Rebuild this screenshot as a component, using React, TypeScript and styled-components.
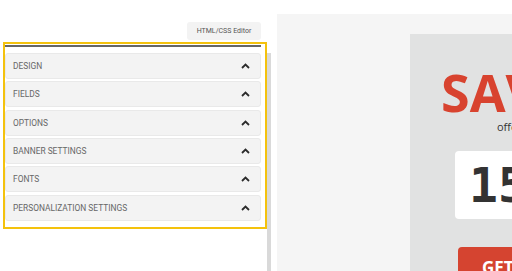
import React from "react";
import styled, { createGlobalStyle } from "styled-components";

const GlobalStyle = createGlobalStyle`
  html, body { margin: 0; padding: 0; background: #ffffff; overflow: hidden; }
  body { font-family: Roboto, "Liberation Sans", sans-serif; }
`;

const Page = styled.div`
  display: flex;
  width: 512px;
  height: 271px;
  overflow: hidden;
`;

const Sidebar = styled.aside`
  flex: none;
  width: 277px;
  display: flex;
  flex-direction: column;
`;

const Toolbar = styled.div`
  display: flex;
  justify-content: flex-end;
  padding: 22px 16px 0 0;
  margin-bottom: 2px;
`;

const EditorButton = styled.button`
  width: 74px;
  height: 18px;
  border: none;
  border-radius: 3px;
  background: #f3f3f3;
  color: #555;
  font-family: Roboto, sans-serif;
  font-size: 7px;
  padding: 0;
  cursor: pointer;
`;

const SidebarBody = styled.div`
  display: flex;
  flex: 1;
`;

const PanelFrame = styled.div`
  box-sizing: border-box;
  margin-left: 3px;
  width: 264px;
  height: 187px;
  border: 2px solid #f4c20d;
  padding: 1px 4px 0 0;
  display: flex;
  flex-direction: column;
`;

const TopRule = styled.div`
  height: 2px;
  background: #666;
  margin-bottom: 6px;
`;

const SectionList = styled.div`
  display: flex;
  flex-direction: column;
  gap: 2.35px;
`;

const SectionRow = styled.div`
  box-sizing: border-box;
  height: 26px;
  display: flex;
  align-items: center;
  justify-content: space-between;
  padding: 0 10px 0 7px;
  background: #f3f3f3;
  border: 1px solid #e9e9e9;
  border-radius: 3px;
`;

const SectionTitle = styled.span`
  font-size: 8.4px;
  color: #676767;
  text-transform: uppercase;
  letter-spacing: 0;
`;

const ScrollTrack = styled.div`
  width: 4px;
  margin-top: 11px;
  background: #d9d9d9;
`;

const Preview = styled.main`
  flex: 1;
  margin-top: 14px;
  background: #f5f5f5;
  padding: 20px 0 0 133px;
  display: flex;
  align-items: flex-start;
`;

const Card = styled.div`
  flex: none;
  width: 300px;
  height: 300px;
  background: #e1e2e2;
  display: flex;
  flex-direction: column;
  align-items: flex-start;
  padding-top: 32px;
  box-sizing: border-box;
`;

const Headline = styled.div<{ $indent: number }>`
  margin-left: ${(p) => p.$indent}px;
  font-family: "Open Sans", sans-serif;
  font-weight: 700;
  font-size: 52px;
  line-height: 52px;
  color: #d8432f;
  white-space: nowrap;
`;

const Subline = styled.div<{ $indent: number }>`
  margin-left: ${(p) => p.$indent}px;
  margin-top: 2px;
  font-family: "Open Sans", sans-serif;
  font-size: 11px;
  line-height: 14px;
  color: #333;
  white-space: nowrap;
`;

const CounterBox = styled.div<{ $indent: number }>`
  margin-left: ${(p) => p.$indent}px;
  margin-top: 17px;
  height: 68px;
  padding: 0 14px;
  background: #ffffff;
  border-radius: 4px;
  display: flex;
  align-items: center;
  font-family: "DejaVu Sans Mono", monospace;
  font-weight: 700;
  font-size: 48px;
  color: #333;
  white-space: nowrap;
`;

const CtaButton = styled.button<{ $indent: number }>`
  margin-left: ${(p) => p.$indent}px;
  margin-top: 28px;
  height: 40px;
  padding: 0 24px;
  border: none;
  border-radius: 4px;
  background: #d54430;
  color: #fff;
  font-family: "Open Sans", sans-serif;
  font-weight: 700;
  font-size: 17px;
  white-space: nowrap;
`;

const Chevron = () => (
  <svg width="9" height="6" viewBox="0 0 9 6" aria-hidden="true">
    <polyline points="1,5 4.5,1.6 8,5" fill="none" stroke="#2b2b2b" strokeWidth="1.8" />
  </svg>
);

const sections = [
  "Design",
  "Fields",
  "Options",
  "Banner Settings",
  "Fonts",
  "Personalization Settings",
];

export default function App() {
  return (
    <>
      <GlobalStyle />
      <Page>
        <Sidebar>
          <Toolbar>
            <EditorButton>HTML/CSS Editor</EditorButton>
          </Toolbar>
          <SidebarBody>
            <PanelFrame>
              <TopRule />
              <SectionList>
                {sections.map((s) => (
                  <SectionRow key={s}>
                    <SectionTitle>{s}</SectionTitle>
                    <Chevron />
                  </SectionRow>
                ))}
              </SectionList>
            </PanelFrame>
            <ScrollTrack />
          </SidebarBody>
        </Sidebar>
        <Preview>
          <Card>
            <Headline $indent={31}>SAVE 15%</Headline>
            <Subline $indent={87}>offer ends in</Subline>
            <CounterBox $indent={45}>15:00</CounterBox>
            <CtaButton $indent={48}>GET DEAL</CtaButton>
          </Card>
        </Preview>
      </Page>
    </>
  );
}
